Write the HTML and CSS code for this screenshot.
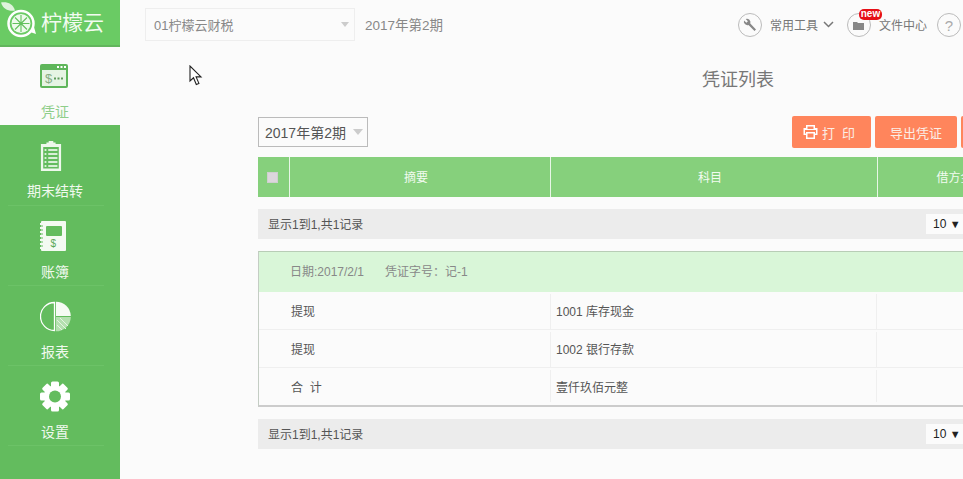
FILE: index.html
```html
<!DOCTYPE html>
<html lang="zh-CN">
<head>
<meta charset="utf-8">
<title>凭证列表</title>
<link rel="stylesheet" href="styles.css">
</head>
<body>
<div class="app">
  <aside class="sidebar">
    <div class="logo">
      <svg class="logo-icon" width="36" height="36" viewBox="0 0 36 36">
        <path d="M-1 -1.500c6-1 12 1 14 8-6 1-12-1-14-8z" fill="#dff3dc"/>
        <circle cx="19" cy="19.500" r="12.500" fill="none" stroke="#fff" stroke-width="2.500"/>
        <circle cx="19" cy="19.500" r="9.500" fill="#eefaec"/>
        <path d="M19 11v17M10.500 19.500h17M13 13.500l12 12M25 13.500l-12 12" stroke="#63c15d" stroke-width="1.100"/>
        <circle cx="19" cy="19.500" r="1.600" fill="#63c15d"/>
        <path d="M28 28l6 2-2-7z" fill="#fff"/>
      </svg>
      <span class="logo-text">柠檬云</span>
    </div>
    <a class="nav-item nav-active">
      <svg width="28" height="24" viewBox="0 0 28 24">
        <rect width="28" height="24" rx="2" fill="#5fb65b"/>
        <rect x="2" y="6" width="24" height="16" fill="#e6f4e4"/>
        <path d="M17 3h2M20.500 3h2M24 3h2" stroke="#fff" stroke-width="2"/>
        <text x="5" y="18.500" class="svg-dollar">$</text>
        <path d="M14 14.500h2M17.500 14.500h2M21 14.500h2" stroke="#5f9a5c" stroke-width="2"/>
      </svg>
      <span>凭证</span>
    </a>
    <a class="nav-item">
      <svg width="22" height="30" viewBox="0 0 24 30" preserveAspectRatio="none">
        <path d="M1 3h6V1.500h2.500V0h5v1.500H17V3h6v27H1z" fill="#eef8ec"/>
        <rect x="3.500" y="6" width="17" height="21.500" fill="#63bc5e"/>
        <path d="M5 9h2M5 13h2M5 17h2M5 21h2M5 25h2" stroke="#fff" stroke-width="1.500"/>
        <path d="M9 9h10M9 13h10M9 17h10M9 21h10M9 25h10" stroke="#fff" stroke-width="1.400"/>
      </svg>
      <span>期末结转</span>
    </a>
    <a class="nav-item">
      <svg width="26" height="31" viewBox="0 0 26 31">
        <rect x="1" width="25" height="30" rx="1" fill="#f3faf2"/>
        <path d="M0 3h3M0 7h3M0 11h3M0 15h3M0 19h3M0 23h3M0 27h3" stroke="#f3faf2" stroke-width="2"/>
        <path d="M1 5h2M1 9h2M1 13h2M1 17h2M1 21h2M1 25h2" stroke="#63bc5e" stroke-width="1"/>
        <rect x="6" y="5" width="16" height="10" rx="1" fill="#63bc5e"/>
        <text x="10.500" y="26" class="svg-book">$</text>
      </svg>
      <span>账簿</span>
    </a>
    <a class="nav-item">
      <svg width="31" height="31" viewBox="0 0 31 31">
        <path d="M14.500 1.500a14 14 0 0 0 0 28z" fill="none" stroke="#fff" stroke-width="1.300"/>
        <path d="M16 .7a14.800 14.800 0 0 1 14.800 14.300H16z" fill="#f5fbf4"/>
        <path d="M16 16h14.800A14.800 14.800 0 0 1 16 30.300z" fill="#b4e0b0"/>
        <path d="M17 19l9 9M20 17l8 8M17 24l5 5" stroke="#e4f4e2" stroke-width="1"/>
      </svg>
      <span>报表</span>
    </a>
    <a class="nav-item">
      <svg width="30" height="31" viewBox="0 0 30 31">
        <g fill="#fff">
          <rect x="11" y="0.500" width="8" height="30" rx="1.500"/>
          <rect x="11" y="0.500" width="8" height="30" rx="1.500" transform="rotate(45 15 15.500)"/>
          <rect x="11" y="0.500" width="8" height="30" rx="1.500" transform="rotate(90 15 15.500)"/>
          <rect x="11" y="0.500" width="8" height="30" rx="1.500" transform="rotate(135 15 15.500)"/>
          <circle cx="15" cy="15.500" r="11"/>
        </g>
        <circle cx="15" cy="15.500" r="6" fill="#63bc5e"/>
      </svg>
      <span>设置</span>
    </a>
  </aside>

  <main class="main">
    <header class="topbar">
      <div class="company">
        <span>01柠檬云财税</span>
        <i class="caret caret-small"></i>
      </div>
      <span class="period">2017年第2期</span>
      <div class="tools">
        <span class="circle-btn">
          <svg width="14" height="14" viewBox="0 0 14 14"><path d="M13 11.500l-1.500 1.500-6-6A3.600 3.600 0 0 1 1 2.500l2.400 2.200 1.500-1.500L2.700 1a3.600 3.600 0 0 1 4.600 4.500z" fill="#888"/></svg>
        </span>
        <span class="tool-label">常用工具</span>
        <svg class="chevron" width="11" height="7" viewBox="0 0 11 7"><path d="M1 1l4.500 4.500L10 1" fill="none" stroke="#777" stroke-width="1.500"/></svg>
        <span class="circle-btn circle-files">
          <svg width="11" height="9" viewBox="0 0 11 9"><path d="M0 1h4l1 1h6v7H0z" fill="#888"/></svg>
          <b class="badge">new</b>
        </span>
        <span class="tool-label">文件中心</span>
        <span class="circle-btn circle-help">?</span>
      </div>
    </header>

    <section class="content">
      <h1 class="title">凭证列表</h1>
      <div class="toolbar">
        <div class="period-select">
          <span>2017年第2期</span>
          <i class="caret caret-light"></i>
        </div>
        <div class="actions">
          <button class="btn btn-print">
            <svg width="15" height="14" viewBox="0 0 15 14"><path d="M3 0h9v3h2.500v7H12v4H3v-4H.5V3H3zM4.500 1.500V4h6V1.500zM2 5v3.500h1V7h9v1.500h1V5zM4.500 8.500v4h6v-4z" fill="#fff" fill-rule="evenodd"/></svg>
            <span>打&nbsp;&nbsp;印</span>
          </button>
          <button class="btn btn-export">导出凭证</button>
          <button class="btn btn-more"></button>
        </div>
      </div>

      <div class="thead">
        <div class="th th-check"><i class="checkbox"></i></div>
        <div class="th">摘要</div>
        <div class="th">科目</div>
        <div class="th">借方金额</div>
        <div class="th"></div>
      </div>

      <div class="pager">
        <span class="pager-info">显示1到1,共1记录</span>
        <span class="page-size">10 <i>▼</i></span>
      </div>

      <div class="voucher">
        <div class="voucher-head">日期:2017/2/1<span class="voucher-no">凭证字号：记-1</span></div>
        <div class="row">
          <div class="cell cell-summary">提现</div>
          <div class="cell">1001 库存现金</div>
          <div class="cell"></div>
          <div class="cell"></div>
        </div>
        <div class="row">
          <div class="cell cell-summary">提现</div>
          <div class="cell">1002 银行存款</div>
          <div class="cell"></div>
          <div class="cell"></div>
        </div>
        <div class="row row-last">
          <div class="cell cell-summary">合&nbsp;&nbsp;计</div>
          <div class="cell">壹仟玖佰元整</div>
          <div class="cell"></div>
          <div class="cell"></div>
        </div>
      </div>

      <div class="pager">
        <span class="pager-info">显示1到1,共1记录</span>
        <span class="page-size">10 <i>▼</i></span>
      </div>
    </section>
  </main>

  <svg class="cursor" width="14" height="21" viewBox="0 0 14 21"><path d="M1 1v15l3.500-3.200 2.800 6.700 2.600-1.100-2.800-6.500H12z" fill="#fff" stroke="#222" stroke-width="1.100"/></svg>
</div>
</body>
</html>
```
FILE: styles.css
```css
* { box-sizing: border-box; }
html, body { margin: 0; height: 100%; overflow: hidden; }
body {
  background: #fbfbfb;
  font-family: "Liberation Sans", "Noto Sans CJK SC", sans-serif;
  font-size: 12px;
  color: #555;
}
.app { position: relative; display: flex; width: 963px; height: 479px; overflow: hidden; }

.sidebar { flex: 0 0 120px; display: flex; flex-direction: column; background: #63bc5e; }
.logo {
  height: 47px;
  display: flex;
  align-items: center;
  gap: 3px;
  padding: 0 0 1px 2px;
  background: #6acb64;
  border-bottom: 2px solid #62b55d;
}
.logo-icon { overflow: visible; }
.logo-text { font-size: 21px; color: #f2fbf0; line-height: 1; }
.nav-item {
  height: 80px;
  position: relative;
  display: flex;
  flex-direction: column;
  align-items: center;
  padding: 16px 10px 0 0;
  color: #f0f9ee;
  font-size: 14px;
  line-height: 20px;
}
.nav-item svg { flex: none; align-self: flex-start; margin-left: 40px; }
.nav-item span { margin-top: 10px; }
.nav-item::after {
  content: "";
  position: absolute;
  left: 8px;
  width: 96px;
  bottom: -1px;
  height: 1px;
  background: #6cc267;
}
.nav-active { height: 78px; padding-top: 17px; background: #fbfbfb; color: #8fce8a; }
.nav-active span { margin-top: 14px; }
.nav-active::after { display: none; }
.svg-dollar { font: 13px "Liberation Sans", sans-serif; fill: #86ad84; }
.svg-book { font: 10px "Liberation Sans", sans-serif; fill: #5aa855; }

.main { flex: 1; min-width: 0; }
.topbar { height: 50px; display: flex; align-items: center; padding: 0 2px 1px 25px; }
.company {
  width: 210px;
  height: 33px;
  display: flex;
  align-items: center;
  justify-content: space-between;
  padding: 0 5px 1px 8px;
  background: #fbfbfb;
  border: 1px solid #eee;
  color: #888;
  font-size: 13px;
}
.period { margin: 0 0 1px 10px; color: #888; font-size: 13.500px; }
.caret { display: block; width: 0; height: 0; border-style: solid; border-width: 6px 5px 0; }
.caret-light { border-color: #ccc transparent transparent; }
.caret-small { border-width: 5px 4px 0; border-color: #ccc transparent transparent; }
.tools { margin-left: auto; display: flex; align-items: center; }
.circle-btn {
  position: relative;
  width: 24px;
  height: 24px;
  margin-top: 1px;
  display: flex;
  align-items: center;
  justify-content: center;
  border: 1px solid #bbb;
  border-radius: 50%;
  color: #aaa;
  font-size: 15px;
}
.tool-label { margin: 0 0 1px 8px; color: #777; font-size: 12px; }
.chevron { margin-left: 5px; }
.circle-files { margin-left: 13px; }
.circle-help { margin-left: 10px; }
.badge {
  position: absolute;
  left: 11px;
  top: -5px;
  width: 23px;
  height: 11px;
  border-radius: 5px;
  background: #e60f17;
  color: #fff;
  font-size: 10px;
  font-weight: 700;
  line-height: 10px;
  text-align: center;
}

.content { width: 960px; margin-left: 138px; }
.title { margin: 18px 0 0; height: 24px; font-size: 18px; font-weight: 400; line-height: 24px; color: #777; text-align: center; }
.toolbar { display: flex; justify-content: space-between; align-items: center; margin-top: 24px; height: 32px; }
.period-select {
  width: 110px;
  height: 30px;
  display: flex;
  align-items: center;
  justify-content: space-between;
  padding: 0 4px 0 6px;
  border: 1px solid #bbb;
  color: #555;
  font-size: 14px;
}
.actions { display: flex; gap: 4px; }
.btn {
  height: 32px;
  border: 0;
  border-radius: 2px;
  background: #ff855c;
  color: #fbeee6;
  font: 13px "Liberation Sans", "Noto Sans CJK SC", sans-serif;
  display: flex;
  align-items: center;
  justify-content: center;
}
.btn-print { width: 79px; gap: 4px; padding: 0 5px 0 0; }
.btn-export { width: 82px; }
.btn-more { width: 257px; }

.thead {
  display: grid;
  grid-template-columns: 32px 261px 327px 174px 1fr;
  height: 40px;
  margin-top: 9px;
  background: #86d07c;
}
.th {
  display: flex;
  align-items: center;
  justify-content: center;
  padding: 0 8px 2px 0;
  border-right: 1px solid #e8f6e6;
  color: #f2fbf0;
  font-size: 12px;
}
.th-check { padding: 0 2px 0 0; }
.checkbox { display: block; width: 11px; height: 11px; background: #dcd6dc; border: 1px solid #cfcfcf; }

.pager {
  display: flex;
  justify-content: space-between;
  align-items: center;
  height: 30px;
  margin-top: 12px;
  padding: 0 255px 0 10px;
  background: #ececec;
  color: #555;
}
.pager-info { margin-bottom: 2px; }
.page-size {
  width: 37px;
  height: 20px;
  padding-left: 7px;
  background: #fbfbfb;
  color: #222;
  line-height: 20px;
  white-space: nowrap;
}
.page-size i { font-style: normal; font-size: 11px; }

.voucher { margin-top: 12px; border: 1px solid #c4cdc4; border-top-color: #b8cdb6; border-bottom: 2px solid #ccc; }
.voucher-head { height: 40px; padding-left: 31px; background: #d9f6d8; color: #888; font-size: 12px; line-height: 40px; }
.voucher-no { margin-left: 21px; }
.row {
  display: grid;
  grid-template-columns: 292px 326px 340px 1fr;
  height: 38px;
  border-bottom: 1px solid #efefef;
  padding-top: 2px;
}
.row-last { border-bottom: 0; height: 37px; padding-bottom: 3px; }
.cell { display: flex; align-items: center; padding: 0 0 2px 5px; border-right: 1px solid #efefef; color: #555; }
.row-last .cell { padding-bottom: 0; }
.cell-summary { padding-left: 32px; }

.cursor { position: absolute; left: 189px; top: 65px; }
```
